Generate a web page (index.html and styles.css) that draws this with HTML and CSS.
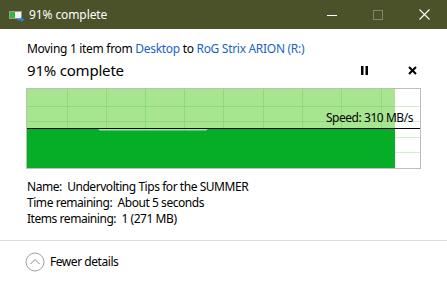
FILE: index.html
```html
<!DOCTYPE html>
<html>
<head>
<meta charset="utf-8">
<link rel="stylesheet" href="styles.css">
</head>
<body>
<div class="window">
  <div class="titlebar">
    <svg class="app-icon" width="16" height="12" viewBox="0 0 16 12">
      <rect x="0.5" y="1.5" width="12" height="7" fill="#f2f2f2" stroke="#9a9a9a"/>
      <rect x="1" y="2" width="5" height="6" fill="#2fb83a"/>
      <path d="M8 8.5h4V6.5l3.5 3-3.5 3v-2H8z" fill="#2d7fd6"/>
    </svg>
    <span class="title">91% complete</span>
    <div class="controls">
      <span class="ctl"><svg width="10" height="10" viewBox="0 0 10 10"><path d="M0 5.5h10" stroke="#fff" stroke-width="1"/></svg></span>
      <span class="ctl"><svg width="10" height="10" viewBox="0 0 10 10"><rect x="0.5" y="0.5" width="9" height="9" fill="none" stroke="#80866a"/></svg></span>
      <span class="ctl"><svg width="11" height="11" viewBox="0 0 11 11"><path d="M0.5 0.5l10 10M10.5 0.5l-10 10" stroke="#fff" stroke-width="1.1"/></svg></span>
    </div>
  </div>
  <div class="content">
    <div class="moving">Moving 1 item from <span class="link">Desktop</span> to <span class="link">RoG Strix ARION (R:)</span></div>
    <div class="status-row">
      <span class="percent">91% complete</span>
      <div class="actions">
        <svg width="8" height="9" viewBox="0 0 8 9"><rect x="0" y="0" width="2.5" height="9" fill="#000"/><rect x="4.5" y="0" width="2.5" height="9" fill="#000"/></svg>
        <svg width="9" height="9" viewBox="0 0 9 9"><path d="M1 1l7 7M8 1l-7 7" stroke="#000" stroke-width="2"/></svg>
      </div>
    </div>
    <div class="graph">
      <svg width="393" height="79" viewBox="0 0 393 79">
        <rect x="0" y="0" width="368" height="79" fill="#a8e590"/>
        <g stroke="#8edc78" stroke-width="1">
          <path d="M40.5 0v79M79.5 0v79M118.5 0v79M157.5 0v79M196.5 0v79M236.5 0v79M275.5 0v79M314.5 0v79M354.5 0v79"/>
          <path d="M0 17.5h368M0 32.5h368M0 48.5h368M0 63.5h368"/>
        </g>
        <g stroke="#d3efca" stroke-width="1">
          <path d="M368 17.5h25M368 32.5h25M368 48.5h25M368 63.5h25"/>
        </g>
        <path d="M0 40H71L73 41.5H179L181 40H368V79H0z" fill="#06ad26"/>
        <path d="M0 39.5H393" stroke="#000" stroke-width="1.2"/>
      </svg>
      <span class="speed">Speed: 310 MB/s</span>
    </div>
    <div class="details">
      <div>Name:&nbsp; Undervolting Tips for the SUMMER</div>
      <div>Time remaining:&nbsp; About 5 seconds</div>
      <div>Items remaining:&nbsp; 1 (271 MB)</div>
    </div>
  </div>
  <div class="footer">
    <svg class="chev" width="20" height="20" viewBox="0 0 20 20">
      <circle cx="10" cy="10" r="9" fill="none" stroke="#a0a0a0" stroke-width="1"/>
      <path d="M5.5 12l4.5-4.5 4.5 4.5" fill="none" stroke="#8a8a8a" stroke-width="1"/>
    </svg>
    <span>Fewer details</span>
  </div>
</div>
</body>
</html>
```
FILE: styles.css
```css
html, body {
  margin: 0;
  padding: 0;
  background: #fff;
}
body {
  font-family: "Noto Sans", "Open Sans", sans-serif;
  font-size: 12px;
  color: #000;
  width: 447px;
  height: 284px;
  overflow: hidden;
}
.window {
  display: flex;
  flex-direction: column;
}
.titlebar {
  height: 29px;
  background: #4b5128;
  display: flex;
  align-items: center;
  color: #fff;
  padding-left: 9px;
}
.app-icon {
  display: block;
  margin-top: 2px;
}
.title {
  margin-left: 4px;
  font-size: 12px;
  letter-spacing: -0.1px;
}
.controls {
  margin-left: auto;
  display: flex;
  height: 29px;
}
.ctl {
  width: 46px;
  display: flex;
  align-items: center;
  justify-content: center;
}
.ctl svg {
  display: block;
}
.content {
  padding: 0 26px 0 26px;
}
.moving {
  margin-top: 12px;
  line-height: 16px;
  padding-left: 1px;
  letter-spacing: -0.3px;
}
.link {
  color: #1a64c8;
}
.status-row {
  display: flex;
  align-items: center;
  height: 20px;
  margin-top: 3px;
}
.percent {
  font-size: 15px;
  padding-left: 1px;
  letter-spacing: -0.2px;
}
.actions {
  margin-left: auto;
  display: flex;
  align-items: center;
  gap: 39px;
  padding-right: 4px;
  padding-top: 1px;
}
.actions svg {
  display: block;
}
.graph {
  position: relative;
  margin-top: 8px;
  width: 393px;
  height: 79px;
  border: 1px solid #bdbdbd;
}
.graph svg {
  display: block;
}
.speed {
  position: absolute;
  right: 7px;
  top: 21px;
  font-size: 12px;
  line-height: 16px;
  letter-spacing: -0.45px;
}
.details {
  margin-top: 10px;
  line-height: 16px;
  padding-left: 1px;
  letter-spacing: -0.45px;
}
.footer {
  margin-top: 13px;
  border-top: 1px solid #dcdcdc;
  height: 44px;
  display: flex;
  align-items: flex-start;
  padding-top: 11px;
  box-sizing: border-box;
  padding-left: 25px;
  gap: 5px;
  letter-spacing: -0.45px;
}
.footer span {
  line-height: 20px;
}
.chev {
  display: block;
}
```
